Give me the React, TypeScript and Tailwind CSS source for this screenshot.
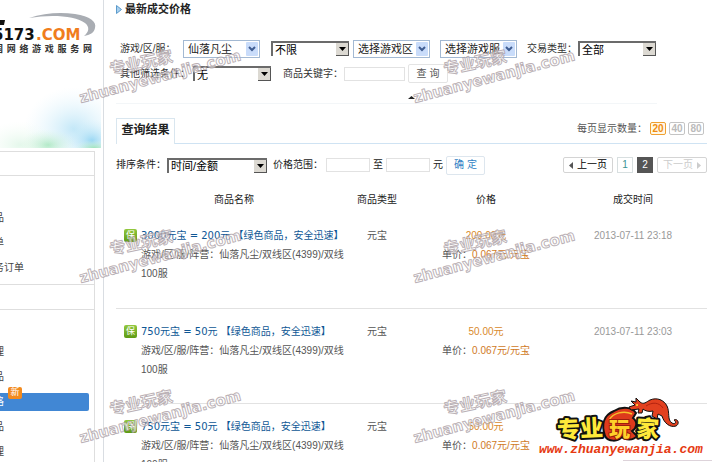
import type { ReactNode } from "react"

const orders = [
  { title: "3000元宝 = 200元 【绿色商品，安全迅速】", price: "200.00元", time: "2013-07-11 23:18" },
  { title: "750元宝 = 50元 【绿色商品，安全迅速】", price: "50.00元", time: "2013-07-11 23:03" },
  { title: "750元宝 = 50元 【绿色商品，安全迅速】", price: "50.00元", time: "" },
]

function XpSelect({ label, value }: { label: string; value: string }) {
  return (
    <span className="relative flex">
      <select
        aria-label={label}
        className="h-[18px] w-[77px] appearance-none border border-[#a3b9d3] bg-white pl-1 text-[11px] leading-4 text-[#222]"
      >
        <option>{value}</option>
      </select>
      <span className="pointer-events-none absolute right-[2px] top-[2px] flex h-[14px] w-[12px] items-center justify-center rounded-[1px] bg-[#c9dcfa]">
        <svg width="8" height="6" viewBox="0 0 8 6" fill="none">
          <path d="M1 1l3 3 3-3" stroke="#3f5d92" strokeWidth="2" />
        </svg>
      </span>
    </span>
  )
}

function ClassicSelect({ id, value, wide }: { id: string; value: string; wide?: boolean }) {
  return (
    <span className="relative flex">
      <select
        id={id}
        aria-label={value}
        className={`h-[15px] appearance-none border-l-2 border-t-2 border-[#6b6b6b] bg-white pl-[2px] text-[11px] leading-3 text-black ${
          wide ? "w-[100px]" : "w-[78px]"
        }`}
      >
        <option>{value}</option>
      </select>
      <span className="pointer-events-none absolute right-0 top-[2px] flex h-[13px] w-[13px] items-center justify-center border-b border-r border-[#555] bg-[#dcd9d2]">
        <svg width="7" height="4" viewBox="0 0 7 4">
          <path d="M0 0h7L3.500 4z" fill="#000" />
        </svg>
      </span>
    </span>
  )
}

function TextBox({ id, label, wide }: { id: string; label: string; wide?: boolean }) {
  return (
    <input
      id={id}
      type="text"
      aria-label={label}
      className={`h-[14px] border border-[#e2e2e2] bg-white text-[10px] ${wide ? "w-[61px]" : "w-[44px]"}`}
    />
  )
}

function SiteLogo() {
  return (
    <div className="h-[75px] pt-[12px]">
      <svg className="block" width="101" height="29" viewBox="0 12 101 29">
        <path
          d="M29 18C44 13 60 12 75 14C90 16 97 22 95 28C94 33 90 35 84 36C89 32 90 27 85 23C76 16 52 14 29 18Z"
          fill="#a9adb3"
        />
        <path d="M0 20h5l-1 5h-4z" fill="#111" />
        <text x="-7" y="40" fontFamily="DejaVu Sans" fontWeight="700" fontSize="15" fill="#111">
          5173
        </text>
        <text x="36" y="40" fontFamily="DejaVu Sans" fontWeight="700" fontSize="15" fill="#f07d1c">
          .COM
        </text>
      </svg>
      <div className="-ml-[6px] mt-[2px] flex justify-between pr-[9px] text-[9px] font-bold leading-3 text-[#333]">
        {"国网络游戏服务网".split("").map((char, i) => (
          <span key={i}>{char}</span>
        ))}
      </div>
    </div>
  )
}

function Watercolor() {
  return (
    <svg className="block h-[73px] w-full" viewBox="0 0 101 73" preserveAspectRatio="none">
      <defs>
        <radialGradient id="wash-blue">
          <stop offset="0" stopColor="#8fd3f2" stopOpacity="0.9" />
          <stop offset="1" stopColor="#d7f1fb" stopOpacity="0" />
        </radialGradient>
        <radialGradient id="wash-green">
          <stop offset="0" stopColor="#9be3b4" stopOpacity="0.9" />
          <stop offset="1" stopColor="#dff7e6" stopOpacity="0" />
        </radialGradient>
      </defs>
      <ellipse cx="74" cy="54" rx="50" ry="42" fill="url(#wash-blue)" opacity="0.6" />
      <ellipse cx="20" cy="70" rx="38" ry="24" fill="url(#wash-green)" opacity="0.3" />
      <ellipse cx="92" cy="66" rx="26" ry="22" fill="url(#wash-blue)" />
      <ellipse cx="48" cy="70" rx="28" ry="16" fill="url(#wash-green)" opacity="0.8" />
      <ellipse cx="94" cy="73" rx="20" ry="8" fill="url(#wash-green)" />
    </svg>
  )
}

function MenuItem({ children, active }: { children: ReactNode; active?: boolean }) {
  return (
    <li className="flex h-[25px] items-center">
      {active ? (
        <a href="#" className="relative mr-[5px] flex h-[18px] flex-1 items-center rounded-r-[2px] bg-[#4187d4] text-white">
          <span className="-ml-[6px]">{children}</span>
          <span className="absolute left-[8px] top-[-6px] flex h-[12px] w-[14px] items-center justify-center rounded-[2px] bg-[#f28a1e] text-[9px] leading-none text-white">
            新
          </span>
        </a>
      ) : (
        <a href="#" className="-ml-[6px]">
          {children}
        </a>
      )}
    </li>
  )
}

function Sidebar() {
  return (
    <aside className="w-[101px] shrink-0 overflow-hidden">
      <SiteLogo />
      <Watercolor />
      <nav className="mr-[6px] mt-[3px] border-r border-t border-[#dedede] text-[#444]">
        <div className="h-[24px] border-b border-[#dedede]" />
        <ul className="h-[109px] border-b border-[#dedede] pt-[29px]">
          <MenuItem>品</MenuItem>
          <MenuItem>单</MenuItem>
          <MenuItem>务订单</MenuItem>
        </ul>
        <div className="h-[25px] border-b border-[#dedede]" />
        <ul className="pb-8 pt-[29px]">
          <MenuItem>理</MenuItem>
          <MenuItem>品</MenuItem>
          <MenuItem active>格</MenuItem>
          <MenuItem>品</MenuItem>
          <MenuItem>理</MenuItem>
        </ul>
      </nav>
    </aside>
  )
}

function Filters() {
  return (
    <form className="mr-[50px] border-b border-[#f3f6f8] pl-[4px] text-[#333]">
      <div className="flex h-[25px] items-center">
        <span className="w-[63px]">游戏/区/服：</span>
        <XpSelect label="游戏" value="仙落凡尘" />
        <span className="ml-[11px] mr-[4px]">
          <ClassicSelect id="limit" value="不限" />
        </span>
        <XpSelect label="游戏区" value="选择游戏区" />
        <span className="ml-[10px]">
          <XpSelect label="游戏服" value="选择游戏服" />
        </span>
        <label htmlFor="trade-type" className="ml-[10px] w-[51px] whitespace-nowrap">
          交易类型：
        </label>
        <ClassicSelect id="trade-type" value="全部" />
      </div>
      <div className="flex h-[25px] items-center">
        <label htmlFor="other" className="w-[73px]">
          其他筛选条件：
        </label>
        <ClassicSelect id="other" value="无" />
        <label htmlFor="keyword" className="ml-[12px] mr-[1px]">
          商品关键字：
        </label>
        <TextBox id="keyword" label="商品关键字" wide />
        <button type="button" className="ml-[3px] h-[19px] w-[40px] rounded-[2px] border border-[#e4e4e4] text-[10px] leading-4 text-[#555]">
          查 询
        </button>
      </div>
      <div className="flex h-[17px] items-center pl-[287px] pt-[6px]">
        <svg width="9" height="4" viewBox="0 0 9 4">
          <path d="M4.500 0L8 3H1z" fill="#222" />
        </svg>
      </div>
    </form>
  )
}

function ResultTabs() {
  return (
    <div className="mt-[14px] flex h-[26px] border-b border-[#cfe3f3]">
      <h2 className="-mb-px w-[59px] border border-b-0 border-[#d9e6ef] bg-white text-center text-[12px] font-bold leading-[22px] text-[#222]">
        查询结果
      </h2>
      <div className="ml-auto flex items-center gap-[3px] pb-[4px] pr-[3px] text-[#555]">
        <span>每页显示数量：</span>
        <button className="h-[13px] w-[16px] rounded-[2px] border border-[#f0a030] bg-[#fff8e6] text-[10px] font-bold leading-[11px] text-[#f08c10]">
          20
        </button>
        <button className="h-[13px] w-[16px] rounded-[2px] border border-[#c4c4c4] text-[10px] font-bold leading-[11px] text-[#bbb]">
          40
        </button>
        <button className="h-[13px] w-[16px] rounded-[2px] border border-[#c4c4c4] text-[10px] font-bold leading-[11px] text-[#bbb]">
          80
        </button>
      </div>
    </div>
  )
}

function SortBar() {
  return (
    <div className="mt-[9px] flex h-[24px] items-center text-[#222]">
      <label htmlFor="sort" className="w-[51px] whitespace-nowrap">
        排序条件：
      </label>
      <ClassicSelect id="sort" value="时间/金额" wide />
      <div className="ml-[6px] flex items-center gap-[3px]">
        <label htmlFor="price-min">价格范围：</label>
        <TextBox id="price-min" label="最低价格" />
        <span>至</span>
        <TextBox id="price-max" label="最高价格" />
        <span>元</span>
        <button className="h-[19px] w-[39px] rounded-[2px] border border-[#dde6ee] text-[10px] leading-4 text-[#2f7fc4]">
          确 定
        </button>
      </div>
      <nav className="ml-auto flex items-center gap-1">
        <a href="#" className="flex h-[16px] w-[50px] items-center justify-center gap-1 rounded-[2px] border border-[#d4d4d4] text-black">
          <svg width="4" height="7" viewBox="0 0 4 7">
            <path d="M4 0v7L0 3.500z" fill="#555" />
          </svg>
          上一页
        </a>
        <a href="#" className="h-[16px] w-[16px] border border-[#d8dfe0] text-center leading-[14px] text-[#3b9393]">
          1
        </a>
        <span className="h-[16px] w-[16px] bg-[#555] text-center leading-4 text-white">2</span>
        <a href="#" className="flex h-[16px] w-[50px] items-center justify-center gap-1 rounded-[2px] border border-[#d4d4d4] text-[#ccc]">
          下一页
          <svg width="4" height="7" viewBox="0 0 4 7">
            <path d="M0 0v7l4-3.500z" fill="#ccc" />
          </svg>
        </a>
      </nav>
    </div>
  )
}

function OrderTable() {
  return (
    <table className="mt-[10px] w-full table-fixed border-collapse text-center">
      <thead>
        <tr className="h-[26px] text-[#222]">
          <th className="font-normal">商品名称</th>
          <th className="w-[61px] pr-[11px] font-normal">商品类型</th>
          <th className="w-[146px] font-normal">价格</th>
          <th className="w-[148px] font-normal">成交时间</th>
        </tr>
      </thead>
      <tbody className="leading-[19px] text-[#555]">
        {orders.map((order, i) => (
          <tr key={i} className="h-[95px] border-b border-[#e2e2e2] align-top">
            <td className="pl-[8px] pt-[13px] text-left">
              <div className="flex gap-1">
                <span className="mt-[3px] flex h-[13px] w-[13px] shrink-0 items-center justify-center rounded-[2px] bg-linear-to-b from-[#93c83e] to-[#5d9a12] text-[9px] leading-none text-white">
                  保
                </span>
                <div>
                  <a href="#" className="whitespace-nowrap font-['DejaVu_Sans','Noto_Sans_CJK_SC',sans-serif] text-[#0e5795]">
                    {order.title}
                  </a>
                  <p>游戏/区/服/阵营：仙落凡尘/双线区(4399)/双线100服</p>
                </div>
              </div>
            </td>
            <td className="pr-[11px] pt-[13px]">元宝</td>
            <td className="pt-[13px]">
              <div className="text-[#d98a2b]">{order.price}</div>
              <div>
                单价：<span className="text-[#d07a1e]">0.067元/元宝</span>
              </div>
            </td>
            <td className="pt-[13px] text-[#999]">{order.time}</td>
          </tr>
        ))}
      </tbody>
    </table>
  )
}

function Watermark() {
  return (
    <svg width="180" height="68" viewBox="0 0 180 68">
      <g
        fill="#fff"
        fillOpacity="0.6"
        stroke="#a5989e"
        strokeOpacity="0.75"
        strokeWidth="1"
        strokeLinejoin="round"
        fontWeight="700"
      >
        <text x="37" y="35" transform="rotate(-12 37 35)" fontFamily="Noto Sans CJK SC" fontSize="16">
          专业玩家
        </text>
        <text x="7" y="63" transform="rotate(-15 7 63)" fontFamily="DejaVu Sans" fontSize="15">
          zhuanyewanjia.com
        </text>
      </g>
    </svg>
  )
}

function WatermarkLayer() {
  return (
    <div
      aria-hidden="true"
      className="pointer-events-none absolute left-[74px] top-[40px] grid grid-cols-[334px_180px] grid-rows-[180px_160px_68px]"
    >
      <Watermark />
      <Watermark />
      <Watermark />
      <Watermark />
      <Watermark />
      <Watermark />
    </div>
  )
}

function PlayerLogo() {
  return (
    <a href="#" aria-label="专业玩家" className="absolute bottom-0 right-0">
      <svg width="178" height="68" viewBox="-6 14 178 68">
        <path d="M83 80.500h89" stroke="#ddd3da" />
        <g fontFamily="Noto Sans CJK SC" fontWeight="900" fontSize="23" fill="#ffe93a" stroke="#111" strokeWidth="4" paintOrder="stroke" strokeLinejoin="round">
          <text x="17" y="57" transform="rotate(-3 40 48)">专业</text>
          <text x="96" y="57" transform="rotate(4 107 48)">家</text>
        </g>
        <path
          d="M65 56C61 44 64 35 74 31C82 26 92 27 96 33L93 38C98 42 97 48 92 51L97 56C93 61 85 60 82 57C78 62 68 62 65 56Z"
          fill="#dd3a1c"
          stroke="#111"
          strokeWidth="2"
        />
        <path d="M69 40C73 33 84 30 92 34" fill="none" stroke="#f7c22a" strokeWidth="1.500" />
        <text x="69" y="56" fontFamily="Noto Sans CJK SC" fontWeight="900" fontSize="21" fill="#ffd02a" stroke="#9c1e0c" strokeWidth="2" paintOrder="stroke">
          玩
        </text>
        <path
          d="M89 27L95 25L91 21L96 22L96 18L100 22C104 25 106 22 110 20C117 17 124 20 127 26C130 32 127 40 132 43C135 45 137 42 134 40C138 38 140 44 136 46C130 48 124 43 122 36L118 34L117 39L112 36L113 31C109 32 105 31 103 29L102 33L98 33L99 29L91 30Z"
          fill="#e2401f"
          stroke="#111"
          strokeWidth="1"
          strokeLinejoin="round"
        />
        <path d="M106 26C112 22 119 22 123 28" fill="none" stroke="#b3230f" strokeWidth="1" />
        <circle cx="97" cy="25" r="1" fill="#ffe93a" />
        <text x="-1" y="73" fontFamily="Liberation Mono" fontWeight="700" fontStyle="italic" fontSize="13" fill="#e63a12">
          www.zhuanyewanjia.com
        </text>
      </svg>
    </a>
  )
}

export default function App() {
  return (
    <div className="relative flex h-screen overflow-hidden bg-white font-['Liberation_Sans','Noto_Sans_CJK_SC',sans-serif] text-[10px] leading-4">
      <Sidebar />
      <main className="ml-[2px] min-w-0 flex-1 self-stretch border-l border-[#d9dde2] pl-[12px] pr-[5px]">
        <h1 className="mb-[18px] flex h-[18px] items-center gap-[3px] text-[11px] font-bold text-[#222]">
          <svg width="6" height="9" viewBox="0 0 6 9">
            <path d="M.5.500v8l5-4z" fill="#a9d0ee" stroke="#5b9acb" />
          </svg>
          最新成交价格
        </h1>
        <Filters />
        <ResultTabs />
        <SortBar />
        <OrderTable />
      </main>
      <WatermarkLayer />
      <PlayerLogo />
    </div>
  )
}
